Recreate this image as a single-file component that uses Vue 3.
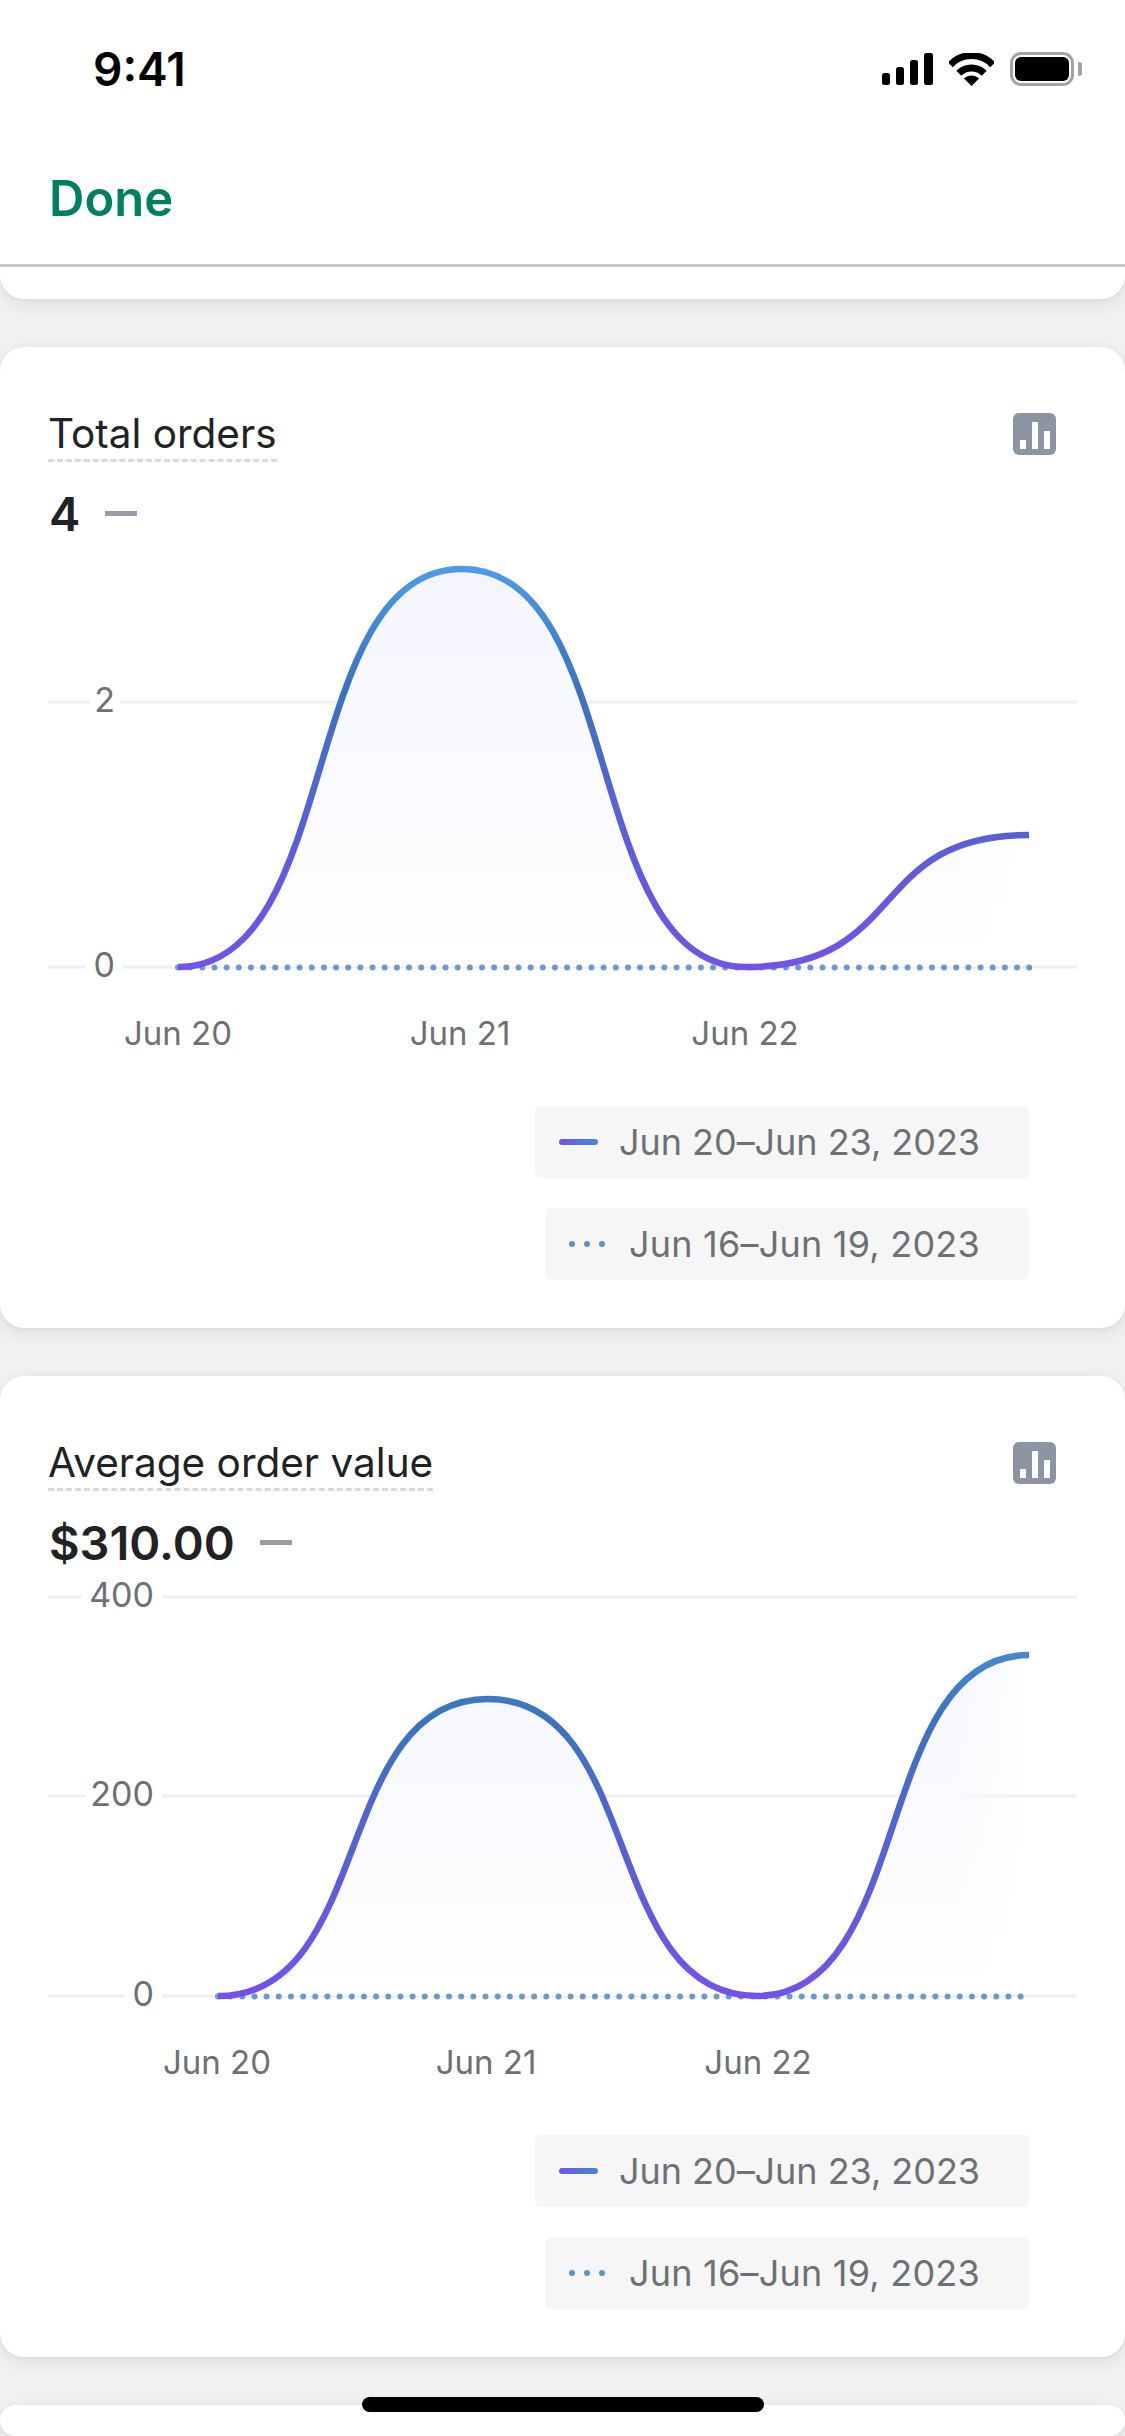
<template>
  <div class="screen">
    <!-- Top bar -->
    <header class="topbar">
      <div class="status">
        <span class="time">9:41</span>
        <div class="status-icons">
          <svg width="51" height="32" viewBox="0 0 51 32" fill="#000">
            <rect x="0" y="20" width="8" height="12" rx="2.5" />
            <rect x="14" y="14" width="8" height="18" rx="2.5" />
            <rect x="28" y="7" width="8" height="25" rx="2.5" />
            <rect x="42" y="0" width="9" height="32" rx="2.5" />
          </svg>
          <svg width="45" height="33" viewBox="0 0 45 33" fill="none" stroke="#000" stroke-width="7">
            <path d="M1.3 11.8a29 29 0 0 1 42.4 0" />
            <path d="M9.8 20.3a18 18 0 0 1 25.4 0" />
            <path d="M22.5 33l-7.5-7.5a10.6 10.6 0 0 1 15 0z" fill="#000" stroke="none" />
          </svg>
          <svg width="72" height="34" viewBox="0 0 72 34">
            <rect x="1.5" y="1.5" width="61" height="31" rx="9.5" fill="none" stroke="#a3a3a3" stroke-width="3" />
            <rect x="5" y="5" width="54" height="24" rx="6" fill="#000" />
            <path d="M68 10a7 7 0 0 1 0 14z" fill="#a3a3a3" />
          </svg>
        </div>
      </div>
      <div class="nav">Done</div>
    </header>

    <main class="cards">
      <div class="card stub"></div>

      <section v-for="chart in charts" :key="chart.id" class="card">
        <div class="card-head">
          <div>
            <div class="title-row"><h2 class="title">{{ chart.title }}</h2></div>
            <div class="metric">
              <span>{{ chart.value }}</span>
              <i class="metric-dash"></i>
            </div>
          </div>
          <svg class="bars-icon" width="43" height="42" viewBox="0 0 43 42">
            <rect width="43" height="42" rx="6" fill="#8c95a3" />
            <rect x="7" y="27" width="6" height="9" fill="#fff" />
            <rect x="19" y="9" width="6" height="27" fill="#fff" />
            <rect x="31" y="18" width="6" height="18" fill="#fff" />
          </svg>
        </div>

        <svg class="plot" width="1125" height="540" viewBox="0 -20 1125 540">
          <defs>
            <linearGradient :id="`stroke-${chart.id}`" gradientUnits="userSpaceOnUse" x1="0" y1="22" x2="0" y2="420">
              <stop offset="0" stop-color="#4d9ae6" />
              <stop offset="0.3" stop-color="#3a74bd" />
              <stop offset="0.6" stop-color="#5463d2" />
              <stop offset="1" stop-color="#7252ea" />
            </linearGradient>
            <linearGradient :id="`fill-${chart.id}`" gradientUnits="userSpaceOnUse" x1="0" y1="22" x2="0" y2="420">
              <stop offset="0" stop-color="#f4f5fe" />
              <stop offset="1" stop-color="#ffffff" />
            </linearGradient>
            <linearGradient :id="`fade-${chart.id}`" gradientUnits="userSpaceOnUse" x1="950" y1="0" x2="1029" y2="0">
              <stop offset="0" stop-color="#fff" />
              <stop offset="1" stop-color="#000" />
            </linearGradient>
            <mask :id="`mask-${chart.id}`" maskUnits="userSpaceOnUse" x="0" y="0" width="1125" height="520">
              <rect width="1125" height="520" :fill="`url(#fade-${chart.id})`" />
            </mask>
          </defs>

          <line v-for="g in chart.grid" :key="g.y" x1="48" x2="1077" :y1="g.y" :y2="g.y" class="grid" />
          <text v-for="g in chart.grid" :key="g.label" class="y-label" :x="chart.labelX" :y="g.y + 10">{{ g.label }}</text>

          <path :d="areaPath(chart)" :fill="`url(#fill-${chart.id})`" :mask="`url(#mask-${chart.id})`" />
          <line class="dots" :x1="chart.xs[0]" :x2="chart.dotsEnd" y1="420.5" y2="420.5" />
          <path :d="linePath(chart)" fill="none" :stroke="`url(#stroke-${chart.id})`" stroke-width="6.5" />

          <text v-for="(d, i) in days" :key="d" class="x-label" :x="chart.dayX[i]" y="498">{{ d }}</text>
        </svg>

        <div class="legend">
          <div class="chip">
            <i class="swatch-line"></i>
            <span>Jun 20–Jun 23, 2023</span>
          </div>
          <div class="chip chip-prev">
            <span class="swatch-dots"><i></i><i></i><i></i></span>
            <span>Jun 16–Jun 19, 2023</span>
          </div>
        </div>
      </section>

      <div class="card rest"></div>
    </main>

    <div class="home-bar"></div>
  </div>
</template>

<script setup>
const days = ['Jun 20', 'Jun 21', 'Jun 22']

const charts = [
  {
    id: 'orders',
    title: 'Total orders',
    value: '4',
    labelX: 115,
    grid: [{ y: 155, label: '2' }, { y: 420, label: '0' }],
    xs: [178, 462, 746, 1029],
    ys: [420, 22, 420, 288],
    dayX: [178, 460, 745],
    dotsEnd: 1030
  },
  {
    id: 'aov',
    title: 'Average order value',
    value: '$310.00',
    labelX: 154,
    grid: [{ y: 21, label: '400' }, { y: 220, label: '200' }, { y: 420, label: '0' }],
    xs: [218, 488, 757, 1029],
    ys: [420, 123, 420, 79],
    dayX: [217, 486, 758],
    dotsEnd: 1021
  }
]

// horizontal tangents at every point, same shape as the chart's curve
function linePath({ xs, ys }) {
  let d = `M${xs[0]} ${ys[0]}`
  for (let i = 1; i < xs.length; i++) {
    const a = (xs[i] - xs[i - 1]) * 0.58
    d += `C${xs[i - 1] + a} ${ys[i - 1]} ${xs[i] - a} ${ys[i]} ${xs[i]} ${ys[i]}`
  }
  return d
}

function areaPath(chart) {
  const last = chart.xs[chart.xs.length - 1]
  return `${linePath(chart)}L${last} 420L${chart.xs[0]} 420Z`
}
</script>

<style scoped>
.screen {
  position: relative;
  width: 1125px;
  height: 2436px;
  overflow: hidden;
  display: flex;
  flex-direction: column;
  background: #f1f2f4;
  font-family: Inter, "Noto Sans", sans-serif;
  color: #202223;
}

/* Top bar */
.topbar {
  background: #fff;
  border-bottom: 3px solid #c9cacb;
  position: relative;
  z-index: 2;
}
.status {
  height: 138px;
  display: flex;
  align-items: center;
  justify-content: space-between;
  padding: 0 43px 0 93px;
  box-sizing: border-box;
}
.time {
  font-size: 46px;
  font-weight: 600;
  color: #000;
}
.status-icons {
  display: flex;
  align-items: center;
  gap: 16px;
}
.nav {
  height: 126px;
  padding: 39px 0 0 49px;
  box-sizing: border-box;
  font-size: 49px;
  line-height: 44px;
  font-weight: 600;
  color: #008060;
}

/* Cards */
.cards {
  flex: 1;
  display: flex;
  flex-direction: column;
  gap: 48px;
}
.card {
  background: #fff;
  border-radius: 24px;
  box-shadow: 0 5px 22px rgba(23, 24, 24, 0.09), 0 1px 4px rgba(23, 24, 24, 0.06);
  padding-bottom: 48px;
}
.stub {
  height: 32px;
  padding: 0;
  border-radius: 0 0 24px 24px;
}
.rest {
  flex: 1;
  padding: 0;
}
.card-head {
  display: flex;
  justify-content: space-between;
  padding: 62px 69px 0 49px;
}
.title-row {
  display: flex;
  margin-left: -1px;
}
.title {
  margin: 0;
  font-size: 40.5px;
  font-weight: 400;
  line-height: 50px;
  border-bottom: 3px dashed #d8d9db;
}
.metric {
  display: flex;
  align-items: center;
  gap: 25px;
  margin-top: 23px;
  height: 56px;
  font-size: 47px;
  font-weight: 600;
}
.metric-dash {
  width: 32px;
  height: 5px;
  background: #999ea4;
}
.bars-icon {
  margin-top: 4px;
}

/* Chart */
.plot {
  display: block;
  margin-top: -14px;
}
.grid {
  stroke: #edeef0;
  stroke-width: 3;
}
.y-label {
  font-size: 34px;
  fill: #6d7175;
  text-anchor: end;
  stroke: #fff;
  stroke-width: 20px;
  stroke-linejoin: round;
  paint-order: stroke;
}
.x-label {
  font-size: 33px;
  fill: #6d7175;
  text-anchor: middle;
}
.dots {
  stroke: #6a98cf;
  stroke-width: 6;
  stroke-linecap: round;
  stroke-dasharray: 0 12.16;
}

/* Legend */
.legend {
  display: flex;
  flex-direction: column;
  align-items: flex-end;
  gap: 30px;
  margin: 39px 96px 0 0;
}
.chip {
  height: 72px;
  display: flex;
  align-items: center;
  padding: 0 49px 0 24px;
  box-sizing: border-box;
  background: #f6f6f7;
  border-radius: 5px;
  font-size: 36px;
  letter-spacing: -0.05px;
  color: #6d7175;
  gap: 21px;
}
.chip-prev {
  letter-spacing: 0.22px;
}
.swatch-line {
  width: 39px;
  height: 6px;
  border-radius: 3px;
  background: linear-gradient(90deg, #7252ea, #4589d8);
}
.swatch-dots {
  display: flex;
  gap: 9px;
  margin-right: 3px;
}
.swatch-dots i {
  width: 6px;
  height: 6px;
  border-radius: 50%;
  background: #5b92cf;
}

.home-bar {
  position: absolute;
  left: 362px;
  top: 2397px;
  width: 402px;
  height: 15px;
  border-radius: 8px;
  background: #000;
  z-index: 3;
}
</style>
